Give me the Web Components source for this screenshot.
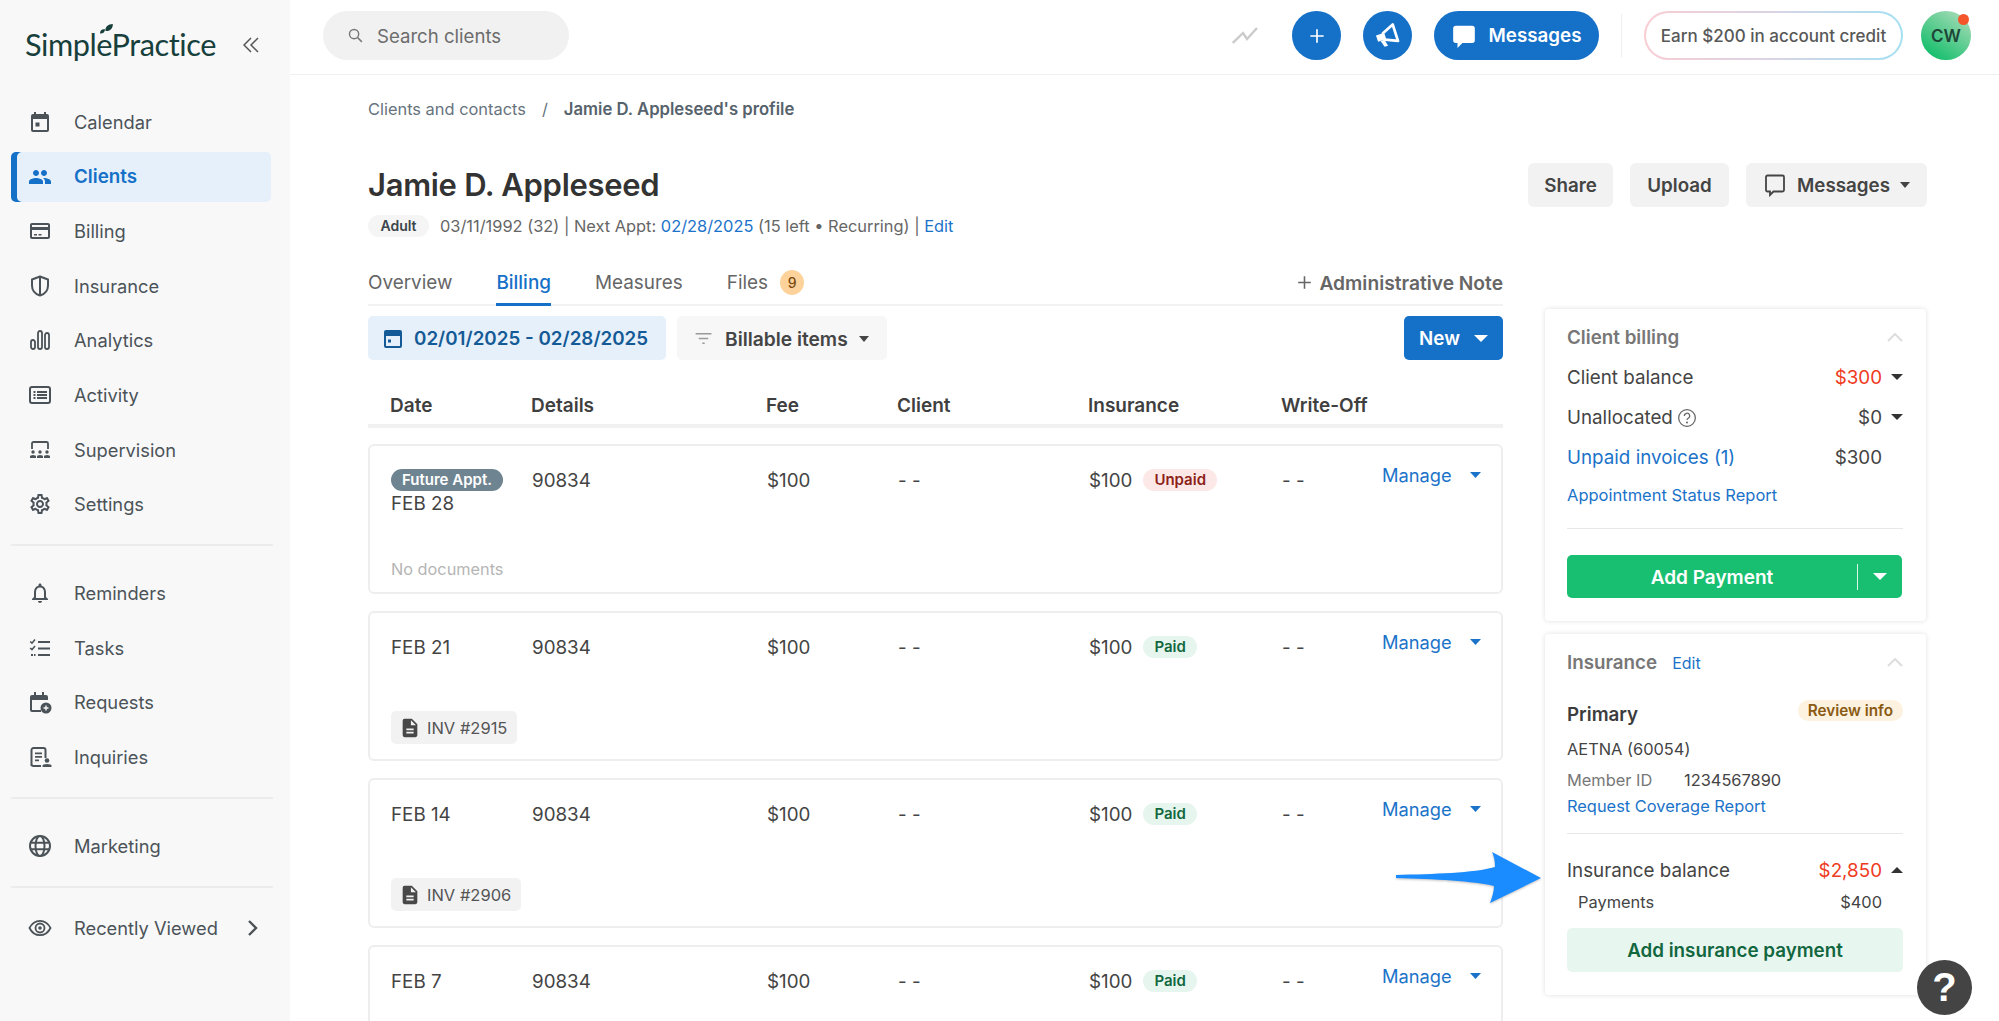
<!DOCTYPE html>
<html>
<head>
<meta charset="utf-8">
<title>Jamie D. Appleseed's profile</title>
<style>
  html, body { margin: 0; height: 100%; overflow: hidden; background: #fff; }
  body { font-family: Inter, "Liberation Sans", sans-serif; color: #444; }
</style>
</head>
<body>
<sp-app></sp-app>
<script>
const ICONS = {
  calendar: '<path d="M19 4h-1V2h-2v2H8V2H6v2H5a2 2 0 0 0-2 2v14a2 2 0 0 0 2 2h14a2 2 0 0 0 2-2V6a2 2 0 0 0-2-2zm0 16H5V9h14v11zM7.5 12.5h4v4h-4z"/>',
  people: '<path d="M16 11c1.66 0 2.99-1.34 2.99-3S17.66 5 16 5s-3 1.34-3 3 1.34 3 3 3zm-8 0c1.66 0 2.99-1.34 2.99-3S9.66 5 8 5 5 6.34 5 8s1.34 3 3 3zm0 2c-2.33 0-7 1.17-7 3.5V19h14v-2.5C15 14.17 10.33 13 8 13zm8 0c-.29 0-.62.02-.97.05 1.16.84 1.97 1.97 1.97 3.45V19h6v-2.5c0-2.33-4.67-3.5-7-3.5z"/>',
  card: '<path d="M20 4H4c-1.11 0-2 .89-2 2v12c0 1.11.89 2 2 2h16c1.11 0 2-.89 2-2V6c0-1.11-.89-2-2-2zm0 14H4v-7h16v7zm0-10H4V6h16v2zM6 15h3v1.6H6zM10.500 15h3v1.6h-3z"/>',
  shield: '<g fill="none" stroke="currentColor" stroke-width="2" stroke-linejoin="round"><path d="M12 2.500 4 5.500v6c0 4.800 3.300 8.600 8 10 4.700-1.400 8-5.200 8-10v-6z"/><path d="M12 3v18"/></g>',
  analytics: '<g fill="none" stroke="currentColor" stroke-width="1.800"><rect x="3" y="12" width="4" height="9" rx="2"/><rect x="10" y="3" width="4" height="18" rx="2"/><rect x="17" y="5" width="4" height="16" rx="2"/></g>',
  activity: '<rect x="2" y="4" width="20" height="16" rx="2" fill="none" stroke="currentColor" stroke-width="2"/><path d="M5.500 8h2v2h-2zM5.500 11h2v2h-2zM5.500 14h2v2h-2zM9 8h10v2H9zM9 11h10v2H9zM9 14h10v2H9z"/>',
  supervision: '<path d="M4 11V5.500A1.500 1.500 0 0 1 5.500 4h13A1.500 1.500 0 0 1 20 5.500V11" fill="none" stroke="currentColor" stroke-width="1.800"/><circle cx="5" cy="14" r="1.700"/><circle cx="12" cy="14" r="1.700"/><circle cx="19" cy="14" r="1.700"/><path d="M2 20v-1.500q0-1.500 3-1.500t3 1.500V20zM9 20v-1.500q0-1.500 3-1.500t3 1.500V20zM16 20v-1.500q0-1.500 3-1.500t3 1.500V20z"/>',
  settings: '<path d="M19.430 12.980c.04-.32.07-.64.07-.98 0-.34-.03-.66-.07-.98l2.110-1.650c.19-.15.24-.42.12-.64l-2-3.460c-.09-.16-.26-.25-.44-.25-.06 0-.12.01-.17.03l-2.490 1c-.52-.4-1.080-.73-1.690-.98l-.38-2.650C14.460 2.180 14.250 2 14 2h-4c-.25 0-.46.18-.49.42l-.38 2.650c-.61.25-1.170.59-1.690.98l-2.490-1c-.06-.02-.12-.03-.18-.03-.17 0-.34.09-.43.25l-2 3.460c-.13.22-.07.49.12.64l2.110 1.650c-.04.32-.07.65-.07.98 0 .33.03.66.07.98l-2.110 1.650c-.19.15-.24.42-.12.64l2 3.460c.09.16.26.25.44.25.06 0 .12-.01.17-.03l2.490-1c.52.4 1.080.73 1.690.98l.38 2.650c.03.24.24.42.49.42h4c.25 0 .46-.18.49-.42l.38-2.650c.61-.25 1.170-.59 1.690-.98l2.490 1c.06.02.12.03.18.03.17 0 .34-.09.43-.25l2-3.460c.12-.22.07-.49-.12-.64l-2.110-1.650zm-1.980-1.710c.04.31.05.52.05.73 0 .21-.02.43-.05.73l-.14 1.130.89.7 1.080.84-.7 1.210-1.270-.51-1.040-.42-.9.68c-.43.32-.84.56-1.250.73l-1.060.43-.16 1.130-.2 1.350h-1.400l-.19-1.350-.16-1.130-1.060-.43c-.43-.18-.83-.41-1.230-.71l-.91-.7-1.060.43-1.270.51-.7-1.210 1.080-.84.89-.7-.14-1.130c-.03-.31-.05-.54-.05-.74s.02-.43.05-.73l.14-1.130-.89-.7-1.080-.84.7-1.210 1.270.51 1.040.42.9-.68c.43-.32.84-.56 1.250-.73l1.060-.43.16-1.130.2-1.350h1.390l.19 1.350.16 1.130 1.060.43c.43.18.83.41 1.230.71l.91.7 1.060-.43 1.270-.51.7 1.210-1.070.85-.89.7.14 1.130zM12 8c-2.210 0-4 1.790-4 4s1.790 4 4 4 4-1.790 4-4-1.790-4-4-4zm0 6c-1.100 0-2-.9-2-2s.9-2 2-2 2 .9 2 2-.9 2-2 2z"/>',
  bell: '<path d="M12 22c1.100 0 2-.9 2-2h-4c0 1.100.9 2 2 2zm6-6v-5c0-3.070-1.630-5.640-4.500-6.320V4c0-.83-.67-1.500-1.500-1.500s-1.500.67-1.500 1.500v.68C7.640 5.360 6 7.920 6 11v5l-2 2v1h16v-1l-2-2zm-2 1H8v-6c0-2.480 1.510-4.500 4-4.500s4 2.020 4 4.500v6z"/>',
  tasks: '<path d="M10 6h12M10 12.500h12M10 19h12" stroke="currentColor" stroke-width="2"/><path d="M2.200 5.500 4 7.200 7 3.600M2.200 12 4 13.700 7 10.100" fill="none" stroke="currentColor" stroke-width="1.600"/><path d="M3 18h2v2H3zM6 18h1.500v2H6z"/>',
  requests: '<path d="M20 12V7a2 2 0 0 0-2-2H4a2 2 0 0 0-2 2v13a2 2 0 0 0 2 2h9v-2H4V10h16zM6 2h2v3H6zM14 2h2v3h-2z"/><circle cx="18" cy="18" r="5.500"/><path d="M15.500 17.300h1.800v-1.800h1.400v1.800h1.800v1.400h-1.800v1.800h-1.400v-1.800h-1.800z" fill="#f8f8f8"/>',
  inquiries: '<path d="M3.500 21V5a2 2 0 0 1 2-2h10a2 2 0 0 1 2 2v8M13 21H5.500a2 2 0 0 1-2-2" fill="none" stroke="currentColor" stroke-width="2"/><path d="M7 7.500h7v1.800H7zM7 11h7v1.800H7zM7 14.500h4v1.800H7z"/><circle cx="19" cy="15.500" r="2.300"/><path d="M14.500 22v-1.300q0-1.800 4.500-1.800t4.500 1.800V22z"/>',
  globe: '<g fill="none" stroke="currentColor" stroke-width="2"><circle cx="12" cy="12" r="10"/><ellipse cx="12" cy="12" rx="4.500" ry="10"/><path d="M2.500 8.800h19M2.500 15.200h19"/></g>',
  eye: '<g fill="none" stroke="currentColor" stroke-width="1.800"><path d="M1.500 12C4 7 8 4.800 12 4.800S20 7 22.500 12C20 17 16 19.200 12 19.200S4 17 1.500 12z"/><circle cx="12" cy="12" r="4.500"/></g><circle cx="12" cy="12" r="1.800"/>',
  chat: '<path d="M4.500 2.500h15a2.500 2.500 0 0 1 2.500 2.500v11a2.500 2.500 0 0 1-2.500 2.500H10.500L6 23v-4.500H4.500A2.500 2.500 0 0 1 2 16V5a2.500 2.500 0 0 1 2.500-2.500z"/>',
  chatline: '<path d="M4.500 2.500h15a1.500 1.500 0 0 1 1.500 1.500v13a1.500 1.500 0 0 1-1.500 1.500H10.500L7 22v-3.500H4.500A1.500 1.500 0 0 1 3 17V4a1.500 1.500 0 0 1 1.500-1.500z" fill="none" stroke="currentColor" stroke-width="1.800"/>',
  horn: '<g transform="rotate(-18 12 12)"><path d="M1.500 8.500h7v6.500h-7z"/><path d="M8.500 8.500 20 3.500v16.500L8.500 15z" fill="none" stroke="currentColor" stroke-width="2.600" stroke-linejoin="round"/><path d="M4 15h4l1.500 6.500h-3.500z"/></g>',
  plus: '<path d="M12 4v16M4 12h16" fill="none" stroke="currentColor" stroke-width="2"/>',
  search: '<g fill="none" stroke="currentColor" stroke-width="2"><circle cx="10" cy="10" r="6.500"/><path d="M15 15l6 6"/></g>',
  doc: '<path fill-rule="evenodd" d="M14 2H6a2 2 0 0 0-2 2v16a2 2 0 0 0 2 2h12a2 2 0 0 0 2-2V8zM8 12.500h8v2H8zm0 3.500h8v2H8zM13 3.500 18.500 9H13z"/>',
  range: '<path fill-rule="evenodd" d="M5 3h14a2 2 0 0 1 2 2v14a2 2 0 0 1-2 2H5a2 2 0 0 1-2-2V5a2 2 0 0 1 2-2zm0 6v10h14V9zM7 12.500h3v3H7z"/>',
  filter: '<path d="M2 6h20M6 12h12M10.500 18h3" fill="none" stroke="currentColor" stroke-width="2"/>',
  help: '<g fill="none" stroke="currentColor" stroke-width="1.500"><circle cx="12" cy="12" r="10"/><path d="M8.800 9.500A3.200 3.200 0 1 1 13.500 12.300c-1 .6-1.500 1.100-1.500 2.200"/></g><circle cx="12" cy="17.500" r="1.200"/>'
};

const icon = (name, w, h = w) => `<svg width="${w}" height="${h}" viewBox="0 0 24 24" fill="currentColor" aria-hidden="true">${ICONS[name]}</svg>`;
const caret = (w = 11, h = 6, cls = '') => `<svg class="${cls}" width="${w}" height="${h}" viewBox="0 0 10 6" preserveAspectRatio="none" fill="currentColor" aria-hidden="true"><path d="M0 0h10L5 6z"/></svg>`;

// Base class: every component just gives its style and its markup
class SpElement extends HTMLElement {
  static get style() { return ''; }
  constructor() {
    super();
    this.attachShadow({ mode: 'open' });
  }
  connectedCallback() {
    this.shadowRoot.innerHTML = `<style>${this.constructor.style}</style>${this.render()}`;
  }
  render() { return '<slot></slot>'; }
}

class SpNavItem extends SpElement {
  static get style() {
    return /*css*/`
    :host { display: flex; align-items: center; box-sizing: border-box; height: 50px; width: 260px; margin-left: 11px;
      padding-left: 17px; font-size: 18.300px; color: #4b5358; border-radius: 5px; position: relative; flex: none; }
    :host([active]) { background: #e6f0fa; color: #1570c8; font-weight: 600; font-size: 18.800px;
      box-shadow: inset 6px 0 0 #1570c8; }
    svg { flex: none; }
    .label { margin-left: 22px; flex: 1; }
    .more { margin-right: 12px; display: flex; }
    `;
  }
  render() {
    const more = this.hasAttribute('more')
      ? `<span class="more"><svg width="12" height="18" viewBox="0 0 12 18" fill="none" stroke="currentColor" stroke-width="2.400"><path d="M2 2l7 7-7 7"/></svg></span>` : '';
    return `${icon(this.getAttribute('icon'), 24)}<span class="label"><slot></slot></span>${more}`;
  }
}

class SpSidebar extends SpElement {
  static get style() {
    return /*css*/`
    :host { display: flex; flex-direction: column; width: 290px; flex: none; background: #f8f8f8; height: 100vh; }
    .brand { display: flex; align-items: center; height: 97px; box-sizing: border-box; padding: 0 31px 8px 25px; justify-content: space-between; flex: none; }
    .logo { position: relative; font-family: Lato, "Open Sans", sans-serif; font-size: 30.700px; letter-spacing: -.45px; color: #173f3c; line-height: 40px; }
    .leaf { position: absolute; left: 75px; top: -1px; }
    .collapse { color: #555; display: flex; }
    nav { display: flex; flex-direction: column; gap: 4.600px; }
    hr { border: 0; height: 2px; background: #ececec; width: 262px; margin: 15px 0 22px 11px; flex: none; }
    hr.last { margin-bottom: 15px; }
    `;
  }
  render() {
    return /*html*/`
    <div class="brand">
      <span class="logo">SimplePractice<svg class="leaf" width="13" height="10" viewBox="0 0 13 10" fill="#173f3c"><path d="M0 9.500C0 6 2 4.800 5 5.200 5 8 3 9.800 0 9.500zM5.500 7C5 3 8 0 12.800 0 13 4 10.500 7.500 5.500 7z"/></svg></span>
      <span class="collapse"><svg width="16" height="16" viewBox="0 0 16 16" fill="none" stroke="currentColor" stroke-width="1.500"><path d="M8 1 1 8l7 7M15 1 8 8l7 7"/></svg></span>
    </div>
    <nav>
      <sp-nav-item icon="calendar">Calendar</sp-nav-item>
      <sp-nav-item icon="people" active>Clients</sp-nav-item>
      <sp-nav-item icon="card">Billing</sp-nav-item>
      <sp-nav-item icon="shield">Insurance</sp-nav-item>
      <sp-nav-item icon="analytics">Analytics</sp-nav-item>
      <sp-nav-item icon="activity">Activity</sp-nav-item>
      <sp-nav-item icon="supervision">Supervision</sp-nav-item>
      <sp-nav-item icon="settings">Settings</sp-nav-item>
    </nav>
    <hr>
    <nav>
      <sp-nav-item icon="bell">Reminders</sp-nav-item>
      <sp-nav-item icon="tasks">Tasks</sp-nav-item>
      <sp-nav-item icon="requests">Requests</sp-nav-item>
      <sp-nav-item icon="inquiries">Inquiries</sp-nav-item>
    </nav>
    <hr>
    <nav><sp-nav-item icon="globe">Marketing</sp-nav-item></nav>
    <hr class="last">
    <nav><sp-nav-item icon="eye" more>Recently Viewed</sp-nav-item></nav>
    `;
  }
}

class SpTopbar extends SpElement {
  static get style() {
    return /*css*/`
    :host { display: flex; align-items: flex-start; box-sizing: border-box; height: 75px; padding: 11px 28px 0 33px; border-bottom: 1px solid #f0f0f0; flex: none; }
    .search { display: flex; align-items: center; width: 246px; height: 49px; border-radius: 25px; background: #f1f1f1; padding-left: 24px; box-sizing: border-box; font-size: 18.600px; color: #6c6c6c; gap: 13px; }
    .search svg { color: #777; }
    .right { margin-left: auto; display: flex; align-items: center; height: 49px; }
    .trend { color: #cbcbcb; display: flex; margin-right: 34px; }
    .round { width: 49px; height: 49px; border-radius: 50%; background: #1570c8; color: #fff; display: flex; align-items: center; justify-content: center; margin-right: 22px; }
    .msg { display: flex; align-items: center; justify-content: center; gap: 11px; width: 165px; height: 49px; border-radius: 25px; background: #1570c8; color: #fff; font-size: 18.800px; font-weight: 600; }
    .sep { width: 1px; height: 43px; background: #eee; margin: 0 22px; }
    .earn { box-sizing: border-box; width: 259px; height: 49px; border-radius: 25px; border: 2px solid transparent;
      background: linear-gradient(#fff, #fff) padding-box, linear-gradient(90deg, #f9cdd3, #d9d4e4 50%, #a5e0f3) border-box;
      display: flex; align-items: center; justify-content: center; font-size: 17px; font-weight: 500; color: #585858; }
    .avatar { position: relative; width: 50px; height: 49px; border-radius: 50%; margin-left: 18px; font-size: 17px; font-weight: 600; color: #1e4638;
      background: linear-gradient(35deg, #19bf6e 15%, #9ad9b0 85%); display: flex; align-items: center; justify-content: center; }
    .dot { position: absolute; right: 2px; top: 3px; width: 11px; height: 11px; background: #f4552a; border-radius: 50%; }
    `;
  }
  render() {
    return /*html*/`
    <div class="search">${icon('search', 17)}<span>Search clients</span></div>
    <div class="right">
      <span class="trend"><svg width="26" height="17" viewBox="0 0 26 17" fill="none" stroke="currentColor" stroke-width="2.400"><path d="M.8 16 11 6l4 6L25 1"/></svg></span>
      <span class="round">${icon('plus', 20)}</span>
      <span class="round">${icon('horn', 25)}</span>
      <span class="msg">${icon('chat', 26)}<span>Messages</span></span>
      <span class="sep"></span>
      <span class="earn">Earn $200 in account credit</span>
      <span class="avatar">CW<span class="dot"></span></span>
    </div>
    `;
  }
}

class SpClientHeader extends SpElement {
  static get style() {
    return /*css*/`
    :host { display: block; }
    .crumbs { font-size: 16.400px; line-height: 20px; color: #66737d; display: flex; gap: 16px; margin-bottom: 44px; }
    .crumbs b { font-weight: 600; color: #56626c; font-size: 16.700px; }
    .title { display: flex; justify-content: space-between; align-items: center; height: 44px; }
    h1 { margin: 0; font-size: 31px; font-weight: 600; color: #333; letter-spacing: -.3px; line-height: 44px; }
    .actions { display: flex; gap: 17px; }
    .btn { display: flex; align-items: center; justify-content: center; height: 44px; box-sizing: border-box; background: #f2f2f2; border-radius: 6px; font-size: 18.800px; font-weight: 600; color: #444; gap: 10px; }
    .meta { display: flex; align-items: center; margin-top: 8px; height: 22px; font-size: 16.400px; color: #666; }
    .tag { background: #f5f5f5; border-radius: 11px; height: 22px; line-height: 22px; width: 61px; text-align: center; font-size: 14px; font-weight: 600; color: #3c464c; margin-right: 11px; }
    a { color: #1b73c9; text-decoration: none; }
    `;
  }
  render() {
    return /*html*/`
    <div class="crumbs"><span>Clients and contacts</span><span>/</span><b>Jamie D. Appleseed's profile</b></div>
    <div class="title">
      <h1>Jamie D. Appleseed</h1>
      <div class="actions">
        <span class="btn" style="width:85px">Share</span>
        <span class="btn" style="width:99px">Upload</span>
        <span class="btn" style="width:181px">${icon('chatline', 24)}<span>Messages</span>${caret(10, 6)}</span>
      </div>
    </div>
    <div class="meta"><span class="tag">Adult</span><span>03/11/1992 (32) | Next Appt:&nbsp;<a>02/28/2025</a>&nbsp;(15 left • Recurring) |&nbsp;<a>Edit</a></span></div>
    `;
  }
}

class SpTabs extends SpElement {
  static get style() {
    return /*css*/`
    :host { display: flex; align-items: stretch; height: 44px; border-bottom: 2px solid #f2f2f2; box-sizing: border-box; font-size: 18.900px; color: #666; }
    .tab { display: flex; align-items: center; margin-right: 44px; height: 44px; box-sizing: border-box; border-bottom: 3px solid transparent; gap: 12px; }
    .tab.on { color: #1570c8; font-weight: 500; border-bottom-color: #1570c8; }
    .count { width: 24px; height: 25px; border-radius: 50%; background: #fdd39b; color: #7a4a10; font-size: 14px; font-weight: 500; display: flex; align-items: center; justify-content: center; }
    .note { margin-left: auto; display: flex; align-items: center; gap: 5px; font-weight: 600; font-size: 19.200px; color: #666; height: 41px; }
    `;
  }
  render() {
    return /*html*/`
    <span class="tab">Overview</span>
    <span class="tab on">Billing</span>
    <span class="tab">Measures</span>
    <span class="tab">Files<span class="count">9</span></span>
    <span class="note">${icon('plus', 19)}Administrative Note</span>
    `;
  }
}

class SpToolbar extends SpElement {
  static get style() {
    return /*css*/`
    :host { display: flex; gap: 11px; margin-top: 10px; font-size: 18.800px; font-weight: 600; }
    .b { display: flex; align-items: center; height: 44px; border-radius: 5px; box-sizing: border-box; padding-top: 1px; }
    .range { width: 298px; background: #e5f0fa; color: #145a96; padding-left: 13px; gap: 9px; }
    .items { width: 210px; background: #f7f7f7; color: #454545; padding-left: 17px; font-size: 19.200px; }
    .items .ic { color: #9a9a9a; display: flex; margin-right: 12px; }
    .items svg.c { margin-left: 11px; }
    .new { margin-left: auto; width: 99px; background: #1570c8; color: #fff; justify-content: center; gap: 14px; }
    `;
  }
  render() {
    return /*html*/`
    <span class="b range">${icon('range', 24)}02/01/2025 - 02/28/2025</span>
    <span class="b items"><span class="ic">${icon('filter', 19)}</span>Billable items${caret(10, 6, 'c')}</span>
    <span class="b new">New${caret(14, 7)}</span>
    `;
  }
}

const COLS = '141px 235px 131px 191px 193px 100px 1fr';

class SpTableHead extends SpElement {
  static get style() {
    return /*css*/`
    :host { display: grid; grid-template-columns: ${COLS}; align-items: center; height: 68px; box-sizing: border-box; padding: 34px 0 8px 22px; border-bottom: 4px solid #f1f1f1; font-size: 19px; font-weight: 600; color: #3f3f3f; }
    `;
  }
  render() {
    return ['Date', 'Details', 'Fee', 'Client', 'Insurance', 'Write-Off', '']
      .map(h => `<span>${h}</span>`).join('');
  }
}

class SpBillingRow extends SpElement {
  static get style() {
    return /*css*/`
    :host { display: flex; flex-direction: column; justify-content: space-between; box-sizing: border-box; flex: none; height: 150px; border: 2px solid #eeeeee; border-radius: 6px; padding: 24px 0 15px 21px; font-size: 18.800px; color: #444; background: #fff; }
    .cols { display: grid; grid-template-columns: ${COLS}; line-height: 22px; }
    .date { display: flex; flex-direction: column; align-items: flex-start; gap: 2px; margin-top: 0; }
    .pill { display: inline-block; height: 22px; line-height: 22px; border-radius: 11px; padding: 0 11px; font-size: 15px; font-weight: 600; margin-top: -1px; }
    .future { background: #6f8491; color: #fff; padding: 0 11px; }
    .unpaid { background: #fce8e6; color: #8c2118; }
    .paid { background: #e6f6ee; color: #12673f; }
    .ins { display: flex; gap: 11px; align-items: flex-start; }
    .manage { color: #1b73c9; font-size: 18.300px; display: flex; align-items: center; gap: 18px; height: 22px; margin-top: -6px; }
    .foot { display: flex; align-items: flex-end; height: 33px; }
    .none { font-size: 16.300px; color: #b5b5b5; line-height: 22px; margin-bottom: -3px; }
    .inv { display: flex; align-items: center; height: 33px; box-sizing: border-box; padding: 0 10px 0 8px; gap: 6px; background: #f2f2f2; border-radius: 5px; font-size: 16.500px; color: #555; }
    .inv svg { color: #484848; }
    `;
  }
  render() {
    const a = n => this.getAttribute(n);
    const status = a('status');
    const future = this.hasAttribute('future') ? '<span class="pill future">Future Appt.</span>' : '';
    const inv = a('invoice');
    let foot = '';
    if (inv) foot = `<span class="inv">${icon('doc', 22)}INV #${inv}</span>`;
    else if (this.hasAttribute('future')) foot = '<span class="none">No documents</span>';
    return /*html*/`
    <div class="cols">
      <span class="date">${future}<span>${a('date')}</span></span>
      <span>90834</span>
      <span>$100</span>
      <span>- -</span>
      <span class="ins">$100 <span class="pill ${status.toLowerCase()}">${status}</span></span>
      <span>- -</span>
      <span class="manage">Manage${caret(11, 6)}</span>
    </div>
    <div class="foot">${foot}</div>
    `;
  }
}

class SpSideCard extends SpElement {
  static get style() {
    return /*css*/`
    :host { display: block; box-sizing: border-box; background: #fff; border-radius: 4px; box-shadow: 0 0 5px rgba(0,0,0,.13); padding: 16px 23px 23px 22px; font-size: 18.800px; color: #444; }
    .top { display: flex; align-items: center; height: 24px; gap: 15px; }
    .top b { font-weight: 600; color: #777; }
    .top svg { margin-left: auto; color: #ddd; }
    .top ::slotted(a) { font-size: 16px; color: #1b73c9; margin-top: 2px; }
    `;
  }
  render() {
    return /*html*/`
    <div class="top"><b>${this.getAttribute('heading')}</b><slot name="action"></slot>
      <svg width="16" height="9" viewBox="0 0 16 9" fill="none" stroke="currentColor" stroke-width="2"><path d="M1 8l7-7 7 7"/></svg></div>
    <slot></slot>
    `;
  }
}

class SpBalanceRow extends SpElement {
  static get style() {
    return /*css*/`
    :host { display: flex; align-items: center; height: 40px; }
    .amt { margin-left: auto; }
    .c { margin-left: 9px; width: 12px; flex: none; display: flex; color: #333; }
    :host([red]) .amt { color: #ef3b22; }
    `;
  }
  render() {
    const dir = this.getAttribute('caret');
    const c = dir === 'up' ? `<svg width="12" height="6" viewBox="0 0 10 6" preserveAspectRatio="none" fill="currentColor"><path d="M0 6h10L5 0z"/></svg>`
      : dir === 'down' ? caret(12, 6) : '';
    return `<slot name="label"></slot><span class="amt">${this.getAttribute('amount')}</span><span class="c">${c}</span>`;
  }
}

class SpBillingCard extends SpElement {
  static get style() {
    return /*css*/`
    :host { display: block; }
    .rows { margin-top: 8px; }
    a { color: #1b73c9; }
    .q { color: #666; display: inline-flex; vertical-align: -4px; margin-left: 4px; }
    .rep { display: block; font-size: 16.500px; line-height: 24px; margin-top: 6px; }
    hr { border: 0; height: 1px; background: #e8e8e8; margin: 21px 0 26px; }
    .pay { display: flex; align-items: center; height: 43px; background: #19bf70; border-radius: 5px; color: #fff; font-weight: 600; font-size: 19px; width: 335px; }
    .pay span { width: 290px; text-align: center; padding-top: 1px; }
    .pay i { width: 1px; height: 26px; background: #fff; opacity: .85; }
    .pay svg { margin-left: 15px; }
    `;
  }
  render() {
    return /*html*/`
    <sp-side-card heading="Client billing">
      <div class="rows">
        <sp-balance-row amount="$300" caret="down" red><span slot="label">Client balance</span></sp-balance-row>
        <sp-balance-row amount="$0" caret="down"><span slot="label">Unallocated<span class="q">${icon('help', 20)}</span></span></sp-balance-row>
        <sp-balance-row amount="$300"><a slot="label" style="color:#1b73c9">Unpaid invoices (1)</a></sp-balance-row>
      </div>
      <a class="rep">Appointment Status Report</a>
      <hr>
      <div class="pay"><span>Add Payment</span><i></i>${caret(14, 7)}</div>
    </sp-side-card>
    `;
  }
}

class SpInsuranceCard extends SpElement {
  static get style() {
    return /*css*/`
    :host { display: block; margin-top: 13px; }
    a { color: #1b73c9; }
    .head { display: flex; justify-content: space-between; align-items: flex-start; margin-top: 29px; }
    .head b { font-weight: 600; color: #3c3c3c; line-height: 24px; }
    .pill { height: 21px; line-height: 21px; border-radius: 11px; padding: 0 10px; background: #fdf1e0; color: #8a5a12; font-size: 15.300px; font-weight: 600; margin-top: -3px; }
    .line { font-size: 16.400px; line-height: 22px; }
    .aetna { margin-top: 11px; }
    .member { margin-top: 9px; display: flex; }
    .member span { color: #777; width: 117px; }
    .req { display: block; margin-top: 4px; }
    hr { border: 0; height: 1px; background: #e8e8e8; margin: 16px 0 16px; }
    .payments { display: flex; justify-content: space-between; padding: 0 21px 0 11px; margin-top: 1px; }
    .add { display: flex; align-items: center; justify-content: center; height: 44px; margin-top: 15px; background: #e8f6f0; border-radius: 5px; color: #12673f; font-weight: 600; }
    `;
  }
  render() {
    return /*html*/`
    <sp-side-card heading="Insurance">
      <a slot="action">Edit</a>
      <div class="head"><b>Primary</b><span class="pill">Review info</span></div>
      <div class="line aetna">AETNA (60054)</div>
      <div class="line member"><span>Member ID</span>1234567890</div>
      <a class="line req">Request Coverage Report</a>
      <hr>
      <sp-balance-row amount="$2,850" caret="up" red><span slot="label">Insurance balance</span></sp-balance-row>
      <div class="line payments"><span>Payments</span><span>$400</span></div>
      <div class="add">Add insurance payment</div>
    </sp-side-card>
    `;
  }
}

class SpApp extends SpElement {
  static get style() {
    return /*css*/`
    :host { display: flex; height: 100vh; overflow: hidden; position: relative; }
    main { flex: 1; min-width: 0; display: flex; flex-direction: column; }
    .page { padding: 24px 72px 0 78px; }
    .cols { display: grid; grid-template-columns: 1135px 381px; column-gap: 42px; margin-top: 25px; }
    .left { min-width: 0; }
    .right { padding-top: 47px; }
    .list { display: flex; flex-direction: column; gap: 17px; margin-top: 16px; }
    .arrow { position: absolute; left: 1394px; top: 850px; filter: drop-shadow(0 1px 1px rgba(0,0,0,.25)); }
    .help { position: absolute; left: 1917px; top: 960px; width: 55px; height: 55px; border-radius: 50%; background: #444; color: #fff; font: 700 40px/55px "Liberation Sans", sans-serif; text-align: center; }
    `;
  }
  render() {
    return /*html*/`
    <sp-sidebar></sp-sidebar>
    <main>
      <sp-topbar></sp-topbar>
      <div class="page">
        <sp-client-header></sp-client-header>
        <div class="cols">
          <div class="left">
            <sp-tabs></sp-tabs>
            <sp-toolbar></sp-toolbar>
            <sp-table-head></sp-table-head>
            <div class="list">
              <sp-billing-row future date="FEB 28" status="Unpaid"></sp-billing-row>
              <sp-billing-row date="FEB 21" status="Paid" invoice="2915"></sp-billing-row>
              <sp-billing-row date="FEB 14" status="Paid" invoice="2906"></sp-billing-row>
              <sp-billing-row date="FEB 7" status="Paid"></sp-billing-row>
            </div>
          </div>
          <div class="right">
            <sp-billing-card></sp-billing-card>
            <sp-insurance-card></sp-insurance-card>
          </div>
        </div>
      </div>
    </main>
    <svg class="arrow" width="150" height="56" viewBox="0 0 150 56" aria-hidden="true"><path fill="#1a8cff" d="M2 25C40 24 80 23 101 17 101 11 100 6 98 2L147 28 96 53C98 47 100 42 100 36 80 31 40 29 2 28z"/></svg>
    <div class="help">?</div>
    `;
  }
}

[
  ['sp-nav-item', SpNavItem], ['sp-sidebar', SpSidebar], ['sp-topbar', SpTopbar],
  ['sp-client-header', SpClientHeader], ['sp-tabs', SpTabs], ['sp-toolbar', SpToolbar],
  ['sp-table-head', SpTableHead], ['sp-billing-row', SpBillingRow], ['sp-side-card', SpSideCard],
  ['sp-balance-row', SpBalanceRow], ['sp-billing-card', SpBillingCard], ['sp-insurance-card', SpInsuranceCard],
  ['sp-app', SpApp]
].forEach(([name, cls]) => customElements.define(name, cls));
</script>
</body>
</html>
